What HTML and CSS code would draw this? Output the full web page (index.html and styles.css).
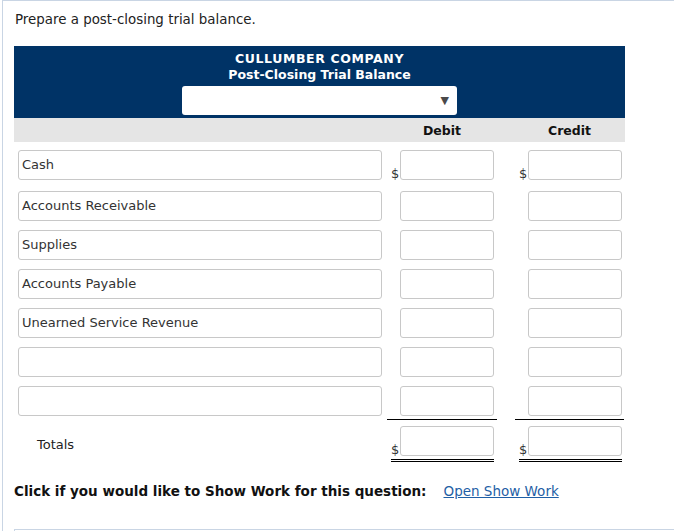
FILE: index.html
```html
<!DOCTYPE html>
<html>
<head>
<meta charset="utf-8">
<link rel="stylesheet" href="styles.css">
</head>
<body>
<div class="frame">
  <p class="prompt">Prepare a post-closing trial balance.</p>
  <div class="sheet">
    <div class="banner">
      <div class="company">CULLUMBER COMPANY</div>
      <div class="title">Post-Closing Trial Balance</div>
      <div class="select"><span class="caret">&#9660;</span></div>
    </div>
    <div class="row head">
      <div></div>
      <div class="colh">Debit</div>
      <div></div>
      <div class="colh">Credit</div>
    </div>
    <div class="row first">
      <div class="lab"><div class="field">Cash</div></div>
      <div class="amt"><span class="dol">$</span><div class="box"></div></div>
      <div></div>
      <div class="amt"><span class="dol">$</span><div class="box"></div></div>
    </div>
    <div class="row">
      <div class="lab"><div class="field">Accounts Receivable</div></div>
      <div class="amt"><span class="dol"></span><div class="box"></div></div>
      <div></div>
      <div class="amt"><span class="dol"></span><div class="box"></div></div>
    </div>
    <div class="row">
      <div class="lab"><div class="field">Supplies</div></div>
      <div class="amt"><span class="dol"></span><div class="box"></div></div>
      <div></div>
      <div class="amt"><span class="dol"></span><div class="box"></div></div>
    </div>
    <div class="row">
      <div class="lab"><div class="field">Accounts Payable</div></div>
      <div class="amt"><span class="dol"></span><div class="box"></div></div>
      <div></div>
      <div class="amt"><span class="dol"></span><div class="box"></div></div>
    </div>
    <div class="row">
      <div class="lab"><div class="field">Unearned Service Revenue</div></div>
      <div class="amt"><span class="dol"></span><div class="box"></div></div>
      <div></div>
      <div class="amt"><span class="dol"></span><div class="box"></div></div>
    </div>
    <div class="row">
      <div class="lab"><div class="field"></div></div>
      <div class="amt"><span class="dol"></span><div class="box"></div></div>
      <div></div>
      <div class="amt"><span class="dol"></span><div class="box"></div></div>
    </div>
    <div class="row last">
      <div class="lab"><div class="field"></div></div>
      <div class="amt"><span class="dol"></span><div class="box"></div></div>
      <div></div>
      <div class="amt"><span class="dol"></span><div class="box"></div></div>
    </div>
    <div class="row totals">
      <div class="totlab">Totals</div>
      <div class="amt"><div class="dbl"><span class="dol">$</span><div class="box"></div></div></div>
      <div></div>
      <div class="amt"><div class="dbl"><span class="dol">$</span><div class="box"></div></div></div>
    </div>
  </div>
  <p class="showwork"><b class="ask">Click if you would like to Show Work for this question:</b><a class="link" href="#">Open Show Work</a></p>
  <div class="nextbox"></div>
</div>
</body>
</html>
```
FILE: styles.css
```css
html, body {
  margin: 0;
  padding: 0;
  background: #ffffff;
}
body {
  font-family: "DejaVu Sans", Verdana, sans-serif;
  font-size: 13px;
  color: #222222;
}
.frame {
  margin-left: 2px;
  border-left: 1px solid #c9d5e4;
  border-top: 1px solid #c9d5e4;
  padding-left: 11px;
}
.prompt {
  margin: 0;
  padding: 11px 0 0 1px;
  font-size: 13.4px;
  line-height: 16px;
  height: 34px;
  color: #222222;
}
.sheet {
  width: 611px;
}
.banner {
  background: #003366;
  color: #ffffff;
  text-align: center;
  padding-top: 5px;
  height: 67px;
  font-family: "DejaVu Sans", sans-serif;
  font-weight: bold;
  font-size: 12.5px;
}
.company, .title {
  line-height: 16px;
}
.company {
  letter-spacing: 0.6px;
}
.select {
  margin: 3px auto 0;
  width: 275px;
  height: 29px;
  box-sizing: border-box;
  background: #ffffff;
  border-radius: 3px;
  display: flex;
  align-items: center;
  justify-content: flex-end;
  padding-right: 8px;
}
.caret {
  color: #4a4a4a;
  font-size: 11px;
  font-weight: normal;
}
.row {
  display: grid;
  grid-template-columns: 372px 112px 16px 111px;
  padding: 5px 0 4px;
}
.row.head {
  background: #e5e5e5;
  height: 24px;
  padding: 0;
  align-items: center;
  font-family: "DejaVu Sans", sans-serif;
  font-weight: bold;
  font-size: 12.5px;
}
.colh {
  text-align: center;
  color: #111111;
}
.row.first {
  padding: 8px 0 6px;
}
.row.last {
  padding-bottom: 0;
}
.lab {
  padding-left: 4px;
}
.field {
  width: 364px;
  height: 30px;
  box-sizing: border-box;
  border: 1px solid #c8c8c8;
  border-radius: 3px;
  padding-left: 3px;
  line-height: 28px;
  color: #333333;
  font-size: 13px;
}
.amt {
  display: flex;
  align-items: flex-end;
  padding-left: 5px;
}
.row.last .amt {
  margin: 0 1px;
  padding-left: 4px;
  padding-bottom: 3px;
  border-bottom: 1px solid #000000;
}
.dol {
  width: 9px;
  font-size: 13px;
  line-height: 14px;
  color: #333333;
  margin-bottom: -1px;
}
.box {
  width: 94px;
  height: 30px;
  box-sizing: border-box;
  border: 1px solid #c8c8c8;
  border-radius: 3px;
  background: #ffffff;
}
.row.totals {
  padding-top: 6px;
}
.totlab {
  padding-left: 23px;
  align-self: center;
  font-size: 13px;
  color: #222222;
}
.dbl {
  display: flex;
  align-items: flex-end;
  padding-bottom: 3px;
  border-bottom: 3px double #000000;
}
.showwork {
  margin: 0;
  padding-top: 17px;
  line-height: 16px;
  font-size: 13px;
  color: #111111;
}
.ask {
  font-size: 13.5px;
}
.link {
  margin-left: 17px;
  color: #1f5fa6;
  text-decoration: underline;
  font-size: 13.5px;
}
.nextbox {
  margin-top: 29px;
  border-top: 1px solid #c9d5e4;
  border-left: 1px solid #c9d5e4;
  height: 1px;
}
```
